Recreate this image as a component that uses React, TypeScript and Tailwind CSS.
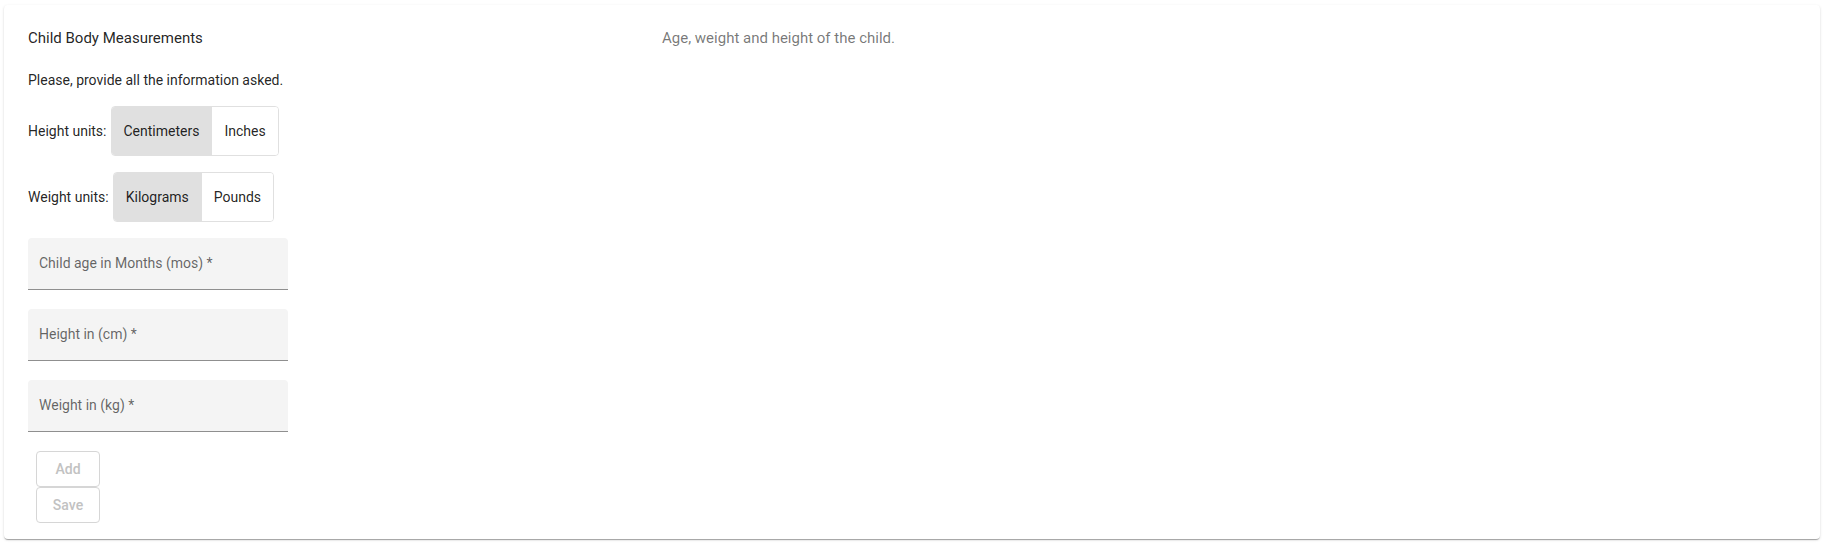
import React from "react";

const font = { fontFamily: "Roboto, 'Liberation Sans', sans-serif" };

function Toggle({ options, selected }: { options: string[]; selected: number }) {
  return (
    <div className="flex h-[50px] rounded-[4px] border border-[#e0e0e0] overflow-hidden">
      {options.map((o, i) => (
        <div
          key={o}
          className={
            (i === selected ? "bg-[#e0e0e0] " : "bg-white ") +
            (i > 0 ? "border-l border-[#e0e0e0] " : "") +
            "flex items-center px-[12px] text-[14px] text-[rgba(0,0,0,0.87)]"
          }
        >
          {o}
        </div>
      ))}
    </div>
  );
}

function Field({ label }: { label: string }) {
  return (
    <div className="w-[260px] h-[52px] bg-[#f4f4f4] rounded-t-[4px] border-b border-[#8f8f8f] flex items-center pl-[11px] text-[14px] text-[rgba(0,0,0,0.6)]">
      {label}
    </div>
  );
}

function Btn({ label }: { label: string }) {
  return (
    <div className="w-[64px] h-[36px] rounded-[4px] border border-[#d6d6d6] flex items-center justify-center text-[14px] font-medium text-[#c2c2c2]">
      {label}
    </div>
  );
}

export default function App() {
  return (
    <div className="bg-white w-[1826px] h-[544px] pt-[5px] pl-[4px] pr-[6px]" style={font}>
      <div className="h-[534px] bg-white rounded-[4px] shadow-[0_2px_1px_-1px_rgba(0,0,0,0.2),0_1px_1px_0_rgba(0,0,0,0.14),0_1px_3px_0_rgba(0,0,0,0.12)] pl-[24px] pt-[21px] flex">
        <div className="w-[634px] flex flex-col">
          <div className="h-[24px] leading-[24px] text-[15px] text-[rgba(0,0,0,0.87)]">Child Body Measurements</div>
          <div className="mt-[18px] h-[24px] leading-[24px] text-[14px] text-[rgba(0,0,0,0.87)]">
            Please, provide all the information asked.
          </div>
          <div className="mt-[14px] flex items-center gap-[4px]">
            <span className="text-[14px] text-[rgba(0,0,0,0.87)]">Height units:</span>
            <Toggle options={["Centimeters", "Inches"]} selected={0} />
          </div>
          <div className="mt-[16px] flex items-center gap-[4px]">
            <span className="text-[14px] text-[rgba(0,0,0,0.87)]">Weight units:</span>
            <Toggle options={["Kilograms", "Pounds"]} selected={0} />
          </div>
          <div className="mt-[16px] flex flex-col gap-[19px]">
            <Field label="Child age in Months (mos) *" />
            <Field label="Height in (cm) *" />
            <Field label="Weight in (kg) *" />
          </div>
          <div className="mt-[19px] ml-[8px] flex flex-col">
            <Btn label="Add" />
            <Btn label="Save" />
          </div>
        </div>
        <div className="h-[24px] leading-[24px] text-[15px] text-[rgba(0,0,0,0.54)]">
          Age, weight and height of the child.
        </div>
      </div>
    </div>
  );
}
